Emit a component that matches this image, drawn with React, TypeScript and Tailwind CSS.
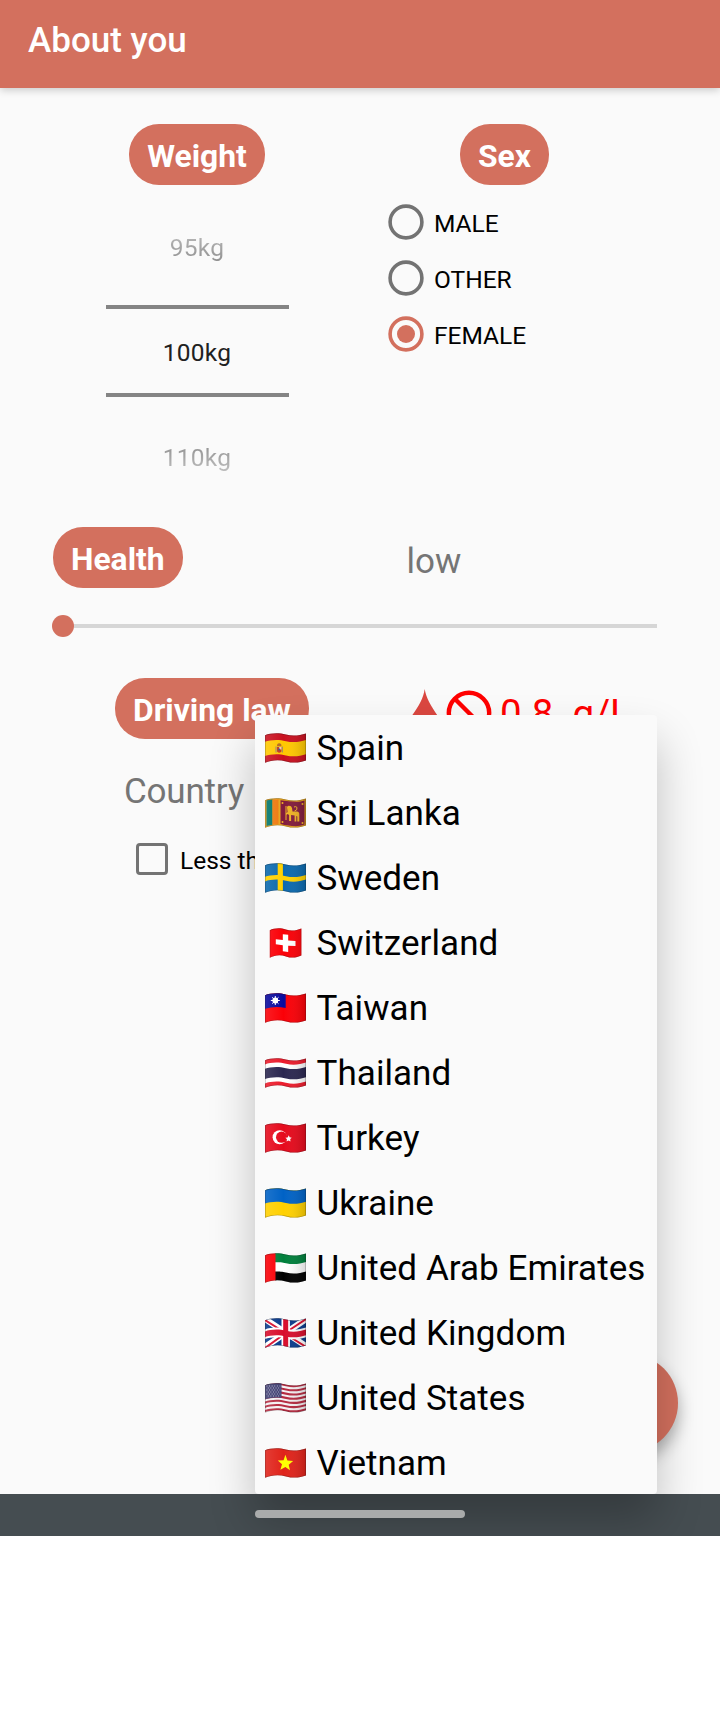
import { useId, type ReactNode } from "react";

const WAVE =
  "M0 2.2C5 .4 13 -.6 21 1.6C28 3.2 35 2.4 41 .4V27.6C35 29.8 28 30.4 21 28.4C13 26.4 6 27.4 0 29.8Z";

function Flag({ children, square }: { children: ReactNode; square?: boolean }) {
  const id = useId();
  return (
    <svg width="41" height="30" viewBox="0 0 41 30" className="shrink-0">
      <defs>
        <clipPath id={id}>
          <path d={WAVE} transform={square ? "translate(4.8 0) scale(.77 1)" : undefined} />
        </clipPath>
        <linearGradient id={id + "g"}>
          <stop offset="0" stopColor="#fff" stopOpacity=".12" />
          <stop offset=".45" stopColor="#fff" stopOpacity="0" />
          <stop offset="1" stopColor="#000" stopOpacity=".16" />
        </linearGradient>
      </defs>
      <g clipPath={`url(#${id})`}>
        {children}
        <rect width="41" height="30" fill={`url(#${id}g)`} />
        <path
          d={WAVE}
          transform={square ? "translate(4.8 0) scale(.77 1)" : undefined}
          fill="none"
          stroke="#1a1a1a"
          strokeOpacity=".3"
          strokeWidth="1.4"
        />
      </g>
    </svg>
  );
}

/* A horizontal band that follows the ripple of the cloth. */
function Band({ y, h, fill, x = 0 }: { y: number; h: number; fill: string; x?: number }) {
  const a = y;
  const b = y + h;
  const k = (n: number) => n.toFixed(2);
  const w = 41;
  if (x > 0) {
    return (
      <path
        d={`M${x} ${k(a + 0.2)}C${x + 5} ${k(a + 0.2)} 17 ${k(a + 0.2)} 21 ${k(a + 1.2)}C28 ${k(a + 2.8)} 35 ${k(a + 2)} ${w} ${k(a)}V${k(b)}C35 ${k(b + 2)} 28 ${k(b + 2.8)} 21 ${k(b + 1.2)}C17 ${k(b + 0.2)} ${x + 5} ${k(b + 0.2)} ${x} ${k(b + 0.2)}Z`}
        fill={fill}
      />
    );
  }
  return (
    <path
      d={`M0 ${k(a + 1.8)}C5 ${k(a)} 13 ${k(a - 1)} 21 ${k(a + 1.2)}C28 ${k(a + 2.8)} 35 ${k(a + 2)} ${w} ${k(a)}V${k(b)}C35 ${k(b + 2)} 28 ${k(b + 2.8)} 21 ${k(b + 1.2)}C13 ${k(b - 1)} 5 ${k(b)} 0 ${k(b + 1.8)}Z`}
      fill={fill}
    />
  );
}

const full = "M0 0H41V30H0Z";

const countries: { name: string; square?: boolean; art: ReactNode }[] = [
  {
    name: "Spain",
    art: (
      <>
        <path d={full} fill="#c9101f" />
        <Band y={7} h={14.3} fill="#ffc800" />
        <path d="M10.5 13.5h1v6h-1zM16.8 13.5h1v6h-1z" fill="#8f7f78" />
        <path d="M12 14h4.4v4.4q-2.2 2.6-4.4 0z" fill="#c43a24" />
        <path d="M14.2 14h2.2v2.4h-2.2z" fill="#e9c9bd" />
        <circle cx="14.2" cy="16.5" r="1" fill="#35599c" />
        <path d="M12 13.3q-.4-2.6 2.2-3q2.6.4 2.2 3z" fill="#b46a22" />
      </>
    ),
  },
  {
    name: "Sri Lanka",
    art: (
      <>
        <path d={full} fill="#e9a51c" />
        <path d="M1.5 2.5C3 2 5 1.7 7.5 1.5V26.8L1.5 28Z" fill="#00756a" />
        <path d="M7.5 1.5L13.5 1.6V26.2L7.5 26.7Z" fill="#ef7a10" />
        <path d="M15.5 2.2C25 3 32 5 39.5 2.5V26.5C32 29.5 25 28 15.5 25.9Z" fill="#821b3c" />
        <g fill="#f0b323">
          <path d="M20.5 8h1v14h-1zM22 9.5q0-2 2-1.8q2.5 0 3 2.3l.5 3.5h4.5q2.5.3 2.3 3v7h-2v-5l-1-.5v5.5h-1.7v-6l-3.5-.4v6h-2v-6l-1.5-1-1.5 1v-1.5l1.5-1.5z" />
          <path d="M29.5 13q3-.5 2.5-3.5q-1-1.5-3-.5" fill="none" stroke="#f0b323" strokeWidth="1" />
          <circle cx="17.5" cy="5" r="1" />
          <circle cx="37.5" cy="6" r="1" />
          <circle cx="17.5" cy="24" r="1" />
          <circle cx="37.5" cy="25" r="1" />
        </g>
      </>
    ),
  },
  {
    name: "Sweden",
    art: (
      <>
        <path d={full} fill="#0b69ae" />
        <Band y={12} h={4.6} fill="#ffd100" />
        <path d="M12.7 0h5.2v30h-5.2z" fill="#ffd100" />
      </>
    ),
  },
  {
    name: "Switzerland",
    square: true,
    art: (
      <>
        <path d={full} fill="#fb0007" />
        <path d="M17.8 6.2l5.4.6v5.6l7.3.6v5l-7.3-.2v6.3l-5.4-.8v-6l-7-1v-5l7 .6z" fill="#fff" />
      </>
    ),
  },
  {
    name: "Taiwan",
    art: (
      <>
        <path d={full} fill="#fb0007" />
        <path d="M0 0H20.7V15Q10 12.6 0 15.8Z" fill="#0a0a9e" />
        <path
          d="M10.3 3v9M5.8 7.5h9M7.1 4.3l6.4 6.4M13.5 4.3L7.1 10.7"
          stroke="#fff"
          strokeWidth="1"
        />
        <circle cx="10.3" cy="7.5" r="2.9" fill="#fff" />
      </>
    ),
  },
  {
    name: "Thailand",
    art: (
      <>
        <path d={full} fill="#ec1c2c" />
        <Band y={4.6} h={19} fill="#fff" />
        <Band y={9} h={10.2} fill="#2b2750" />
      </>
    ),
  },
  {
    name: "Turkey",
    art: (
      <>
        <path d={full} fill="#e60a1c" />
        <circle cx="14.6" cy="14.2" r="7" fill="#fff" />
        <circle cx="16.6" cy="14.2" r="5.6" fill="#e60a1c" />
        <path d="M23.8 12.2l.8 2 2.2.5-1.6 1.4.3 2.3-2-1-2 1.1.5-2.3-1.6-1.5 2.2-.2z" fill="#fff" />
      </>
    ),
  },
  {
    name: "Ukraine",
    art: (
      <>
        <path d={full} fill="#ffd000" />
        <Band y={-2} h={15.8} fill="#0062c6" />
      </>
    ),
  },
  {
    name: "United Arab Emirates",
    art: (
      <>
        <path d={full} fill="#fff" />
        <Band y={-2} h={11} fill="#00803c" x={10} />
        <Band y={18.4} h={13} fill="#000" x={10} />
        <path d="M0 0h10.5v30h-10.5z" fill="#fb0007" />
      </>
    ),
  },
  {
    name: "United Kingdom",
    art: (
      <>
        <path d={full} fill="#0a3b8c" />
        <path d="M0 1L41 28M0 29L41 1" stroke="#fff" strokeWidth="6" />
        <path d="M0 2L19 14M22 17L41 29M0 30L18 17M23 13L41 1" stroke="#d80d2c" strokeWidth="2" />
        <Band y={9.6} h={9.6} fill="#fff" />
        <path d="M16.5 0h8.4v30h-8.4z" fill="#fff" />
        <Band y={11.6} h={5.6} fill="#d80d2c" />
        <path d="M18.2 0h5v30h-5z" fill="#d80d2c" />
      </>
    ),
  },
  {
    name: "United States",
    art: (
      <>
        <path d={full} fill="#f4f0f2" />
        {[0, 1, 2, 3, 4, 5, 6].map((i) => (
          <Band key={i} y={i * 4.2} h={2.1} fill="#b52a40" />
        ))}
        <path d="M0 0H16.5V14.8Q8 13.8 0 16.3Z" fill="#403f72" />
        <path
          d="M1.5 3H16M2.8 5H16M1.5 7H16M2.8 9H16M1.5 11H16M2.8 13H16"
          stroke="#c9c8dc"
          strokeWidth=".9"
          strokeDasharray=".9 1.7"
        />
      </>
    ),
  },
  {
    name: "Vietnam",
    art: (
      <>
        <path d={full} fill="#e0231a" />
        <path d="M20.4 6.8l2 5.7 5.8.6-4.5 3.6 1.3 5.6-4.6-3.3-5 2.8 1.6-5.5-4.2-3.9 5.8-.1z" fill="#ff0" />
      </>
    ),
  },
];

function Pill({ children }: { children: ReactNode }) {
  return (
    <div className="flex h-[61px] w-fit items-center rounded-[30px] bg-[#d3705e] px-[18px] pt-[3px] text-[31.8px] leading-[32px] font-bold whitespace-nowrap text-white">
      {children}
    </div>
  );
}

function Radio({ label, checked }: { label: string; checked?: boolean }) {
  return (
    <div className="flex h-14 items-center">
      <svg width="36" height="36" viewBox="0 0 36 36" className="mr-[10px]">
        <circle cx="18" cy="18" r="15.9" fill="none" stroke={checked ? "#d3705e" : "#737373"} strokeWidth="3.6" />
        {checked && <circle cx="18" cy="18" r="9" fill="#d3705e" />}
      </svg>
      <span className="pt-[5px] text-[24.5px] leading-none text-black">{label}</span>
    </div>
  );
}

export default function App() {
  return (
    <div className="relative h-[1712px] w-[720px] overflow-hidden bg-white font-['Roboto',sans-serif]">
      <div className="relative flex h-[1536px] flex-col overflow-hidden bg-[#fafafa]">
        <header className="flex h-[88px] shrink-0 items-start bg-[#d3705e] pt-[23px] pl-7 text-[35px] leading-[36px] font-medium text-white shadow-[0_2px_8px_rgba(0,0,0,0.2)]">
          About you
        </header>

        <section className="flex h-[403px] shrink-0 pt-9">
          <div className="flex w-[394px] flex-col items-center">
            <Pill>Weight</Pill>
            <div className="mt-[46px] w-[183px] text-center text-[24.5px] leading-[34px] tracking-[0.3px]">
              <div className="bg-linear-to-b from-[#bdbdbd] to-[#8c8c8c] bg-clip-text text-transparent">95kg</div>
              <div className="mt-10 flex h-[92px] items-center justify-center border-y-4 border-[#848484] pt-[3px] text-[#212121]">
                100kg
              </div>
              <div className="mt-11 bg-linear-to-b from-[#8c8c8c] to-[#c4c4c4] bg-clip-text text-transparent">
                110kg
              </div>
            </div>
          </div>
          <div className="flex flex-col">
            <div className="pl-[66px]">
              <Pill>Sex</Pill>
            </div>
            <div className="mt-[9px] -ml-[6px] flex flex-col">
              <Radio label="MALE" />
              <Radio label="OTHER" />
              <Radio label="FEMALE" checked />
            </div>
          </div>
        </section>

        <section className="shrink-0 px-[52px] pt-9">
          <div className="flex h-[61px]">
            <div className="w-[354.5px] pl-px">
              <Pill>Health</Pill>
            </div>
            <span className="pt-[17px] text-[35px] leading-[36px] text-[#757575]">low</span>
          </div>
          <div className="mt-[27px] flex h-[22px] w-[605px] items-center">
            <div className="size-[22px] rounded-full bg-[#d3705e]" />
            <div className="h-1 flex-1 bg-[#d6d6d6]" />
          </div>
        </section>

        <section className="shrink-0 pt-[41px] pl-[115px]">
          <div className="flex h-[61px]">
            <div className="w-[296px]">
              <Pill>Driving law</Pill>
            </div>
            <svg width="28" height="50" viewBox="0 0 28 50" className="mt-[11px]">
              <path
                d="M13.7 0C15 9 20 17 26.5 26.5C32 40 22 48 14 48C5 48 -4 40 1 26.5C8 17 12.5 9 13.7 0Z"
                fill="#db4740"
              />
            </svg>
            <svg width="46" height="46" viewBox="0 0 46 46" className="mt-3 ml-[7px]">
              <circle cx="23" cy="23" r="20.2" fill="none" stroke="#f00" strokeWidth="4.4" />
              <path d="M9 9L37 37" stroke="#f00" strokeWidth="4.4" />
            </svg>
            <span className="mt-[15px] ml-[8px] text-[38.5px] leading-[42px] whitespace-pre text-[#f00]">0.8  g/L</span>
          </div>
          <div className="mt-[35px] ml-[9px] w-fit text-[35px] leading-[36px] tracking-[-0.2px] text-[#757575]">
            Country
          </div>
          <div className="mt-[33px] flex items-center pl-[21px]">
            <div className="size-8 rounded-[4px] border-[3.5px] border-[#737373]" />
            <span className="pt-[5px] pl-3 text-[24.5px] leading-none whitespace-nowrap text-black">Less than</span>
          </div>
        </section>

        <div className="absolute top-[1354px] left-[580px] size-[98px] rounded-full bg-[#d3705e] shadow-[0_9px_16px_rgba(0,0,0,0.3)]" />

        <div className="mt-auto h-[42px] shrink-0 bg-[#454d51]" />

        <ul className="absolute top-[715px] left-[255px] w-[402px] rounded-[4px] bg-[#fafafa] tracking-[0.06px] shadow-[0_26px_46px_rgba(0,0,0,0.24)]">
          {countries.map((c) => (
            <li
              key={c.name}
              className="flex h-[65px] items-center pl-[10px] text-[35px] leading-[36px] text-black last:h-16 last:pt-px"
            >
              <Flag square={c.square}>{c.art}</Flag>
              <span className="pt-[2px] pl-[10.5px] whitespace-nowrap">{c.name}</span>
            </li>
          ))}
        </ul>
        <div className="absolute top-[1510px] left-[255px] h-2 w-[210px] rounded-full bg-[#a9abab]" />
      </div>
    </div>
  );
}
